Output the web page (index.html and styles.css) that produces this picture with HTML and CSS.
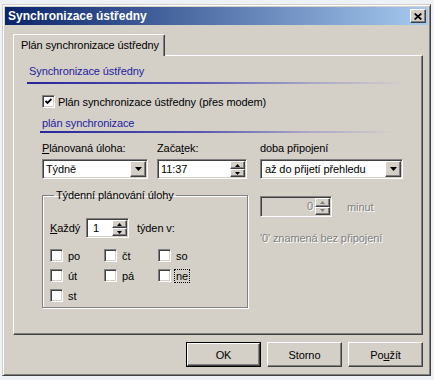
FILE: index.html
```html
<!DOCTYPE html>
<html lang="cs">

<head>
  <meta charset="utf8">
  <meta name="viewport" content="width=device-width, initial-scale=1.0">
  <title>Synchronizace ústředny</title>
  <link rel="stylesheet" href="styles.css">
</head>

<body>
  <div class="window">
    <div class="titlebar">
      <span class="title">Synchronizace ústředny</span>
      <span class="close raised">
        <svg width="8" height="7" viewBox="0 0 8 7">
          <path d="M0.7 0.5 L7.3 6.5 M7.3 0.5 L0.7 6.5" stroke="#000" stroke-width="1.7" fill="none" />
        </svg>
      </span>
    </div>

    <div class="client">
      <div class="tabs">
        <div class="tab">Plán synchronizace ústředny</div>
      </div>

      <div class="panel">
        <div class="section">Synchronizace ústředny</div>

        <div class="check-row">
          <span class="check">
            <svg width="7" height="7" viewBox="0 0 7 7">
              <path d="M0.5 3 L2.5 5 L6.5 1" stroke="#000" stroke-width="1.8" fill="none" />
            </svg>
          </span>
          Plán synchronizace ústředny (přes modem)
        </div>

        <div class="section sub">plán synchronizace</div>

        <div class="schedule">
          <div class="left">
            <div class="fields">
              <div class="field task">
                <div class="label"><u>P</u>lánovaná úloha:</div>
                <div class="combo sunken">
                  <span class="value">Týdně</span>
                  <span class="drop raised">
                    <svg width="7" height="4" viewBox="0 0 7 4"><path d="M0 0h7L3.5 4z" fill="#000" /></svg>
                  </span>
                </div>
              </div>
              <div class="field start">
                <div class="label">Zača<u>t</u>ek:</div>
                <div class="spin sunken">
                  <span class="value">11:37</span>
                  <span class="spin-btns">
                    <span class="spin-btn raised"><svg width="5" height="3" viewBox="0 0 5 3"><path d="M0 3h5L2.5 0z" fill="#000" /></svg></span>
                    <span class="spin-btn raised"><svg width="5" height="3" viewBox="0 0 5 3"><path d="M0 0h5L2.5 3z" fill="#000" /></svg></span>
                  </span>
                </div>
              </div>
            </div>

            <fieldset class="group">
              <legend>Týdenní plánování úlohy</legend>
              <div class="every">
                <span class="every-label"><u>K</u>aždý</span>
                <div class="spin sunken count">
                  <span class="value">1</span>
                  <span class="spin-btns">
                    <span class="spin-btn raised"><svg width="5" height="3" viewBox="0 0 5 3"><path d="M0 3h5L2.5 0z" fill="#000" /></svg></span>
                    <span class="spin-btn raised"><svg width="5" height="3" viewBox="0 0 5 3"><path d="M0 0h5L2.5 3z" fill="#000" /></svg></span>
                  </span>
                </div>
                <span class="week">týden v:</span>
              </div>
              <div class="days">
                <div class="day"><span class="check"></span>po</div>
                <div class="day"><span class="check"></span>čt</div>
                <div class="day"><span class="check"></span>so</div>
                <div class="day"><span class="check"></span>út</div>
                <div class="day"><span class="check"></span>pá</div>
                <div class="day"><span class="check"></span><span class="focus">ne</span></div>
                <div class="day"><span class="check"></span>st</div>
              </div>
            </fieldset>
          </div>

          <div class="right">
            <div class="label">doba připojení</div>
            <div class="combo sunken">
              <span class="value">až do přijetí přehledu</span>
              <span class="drop raised">
                <svg width="7" height="4" viewBox="0 0 7 4"><path d="M0 0h7L3.5 4z" fill="#000" /></svg>
              </span>
            </div>
            <div class="minutes">
              <div class="spin sunken disabled">
                <span class="value">0</span>
                <span class="spin-btns">
                  <span class="spin-btn raised"><svg width="5" height="3" viewBox="0 0 5 3"><path d="M0 3h5L2.5 0z" fill="#808080" /></svg></span>
                  <span class="spin-btn raised"><svg width="5" height="3" viewBox="0 0 5 3"><path d="M0 0h5L2.5 3z" fill="#808080" /></svg></span>
                </span>
              </div>
              <span class="muted">minut</span>
            </div>
            <div class="muted note">'0' znamená bez připojení</div>
          </div>
        </div>
      </div>

      <div class="buttons">
        <div class="button default"><span class="raised">OK</span></div>
        <div class="button"><span class="raised">Storno</span></div>
        <div class="button"><span class="raised">Po<u>u</u>žít</span></div>
      </div>
    </div>
  </div>
</body>

</html>
```

FILE: styles.css
```css
html,
body {
  margin: 0;
}

body {
  padding: 4px 0 0 2px;
  background: #eef2f7;
  font-family: 'Liberation Sans', Arial, sans-serif;
  font-size: 11px;
  letter-spacing: -0.1px;
  color: #000;
}

u {
  text-decoration-thickness: 1px;
  text-underline-offset: 1px;
}

/* 3D borders */
.raised {
  box-sizing: border-box;
  background: #d4d0c8;
  border: 1px solid;
  border-color: #fff #404040 #404040 #fff;
  box-shadow: inset -1px -1px #808080;
}

.sunken {
  box-sizing: border-box;
  background: #fff;
  border: 1px solid;
  border-color: #808080 #fff #fff #808080;
  box-shadow: inset 1px 1px #404040, inset -1px -1px #d4d0c8;
  padding: 1px;
}

.window {
  width: 429px;
  height: 372px;
  box-sizing: border-box;
  background: #d4d0c8;
  border: 1px solid;
  border-color: #d4d0c8 #404040 #404040 #d4d0c8;
  box-shadow: inset 1px 1px #fff, inset -1px -1px #808080;
  padding: 2px;
  display: flex;
  flex-direction: column;
}

.titlebar {
  height: 18px;
  display: flex;
  align-items: center;
  justify-content: space-between;
  padding: 0 2px 0 3px;
  background: linear-gradient(90deg, #0a246a, #a6caf0);
}

.title {
  color: #fff;
  font-weight: bold;
  font-size: 12px;
  letter-spacing: 0;
}

.close {
  width: 16px;
  height: 14px;
  display: flex;
  align-items: center;
  justify-content: center;
}

.client {
  flex: 1;
  padding: 9px 5px 0 8px;
}

.tabs {
  display: flex;
  position: relative;
  z-index: 1;
}

.tab {
  width: 152px;
  height: 22px;
  box-sizing: border-box;
  margin-bottom: -1px;
  padding: 4px 0 0 7px;
  background: #d4d0c8;
  border: 1px solid;
  border-bottom: 0;
  border-color: #fff #404040 #fff #fff;
  border-radius: 2px 2px 0 0;
  box-shadow: inset -1px 0 #808080;
}

.panel {
  height: 280px;
  box-sizing: border-box;
  border: 1px solid;
  border-color: #fff #404040 #404040 #fff;
  box-shadow: inset -1px -1px #808080;
  padding-top: 9px;
}

.section {
  margin-left: 13px;
  width: 378px;
  padding-left: 2px;
  line-height: 13px;
  color: #1c1ca0;
}

.section::after {
  content: "";
  display: block;
  height: 2px;
  margin: 4px 0 0 -2px;
  background: linear-gradient(90deg, #26269a, #5858b0 45%, #a9a8c8 75%, #d4d0c8);
}

.section.sub {
  margin: 9px 0 0 26px;
  width: 355px;
}

.section.sub::after {
  margin-top: 1px;
}

.check-row {
  display: flex;
  align-items: center;
  gap: 3px;
  height: 13px;
  margin: 11px 0 0 28px;
}

.check {
  width: 13px;
  height: 13px;
  flex: none;
  box-sizing: border-box;
  background: #fff;
  border: 1px solid;
  border-color: #808080 #fff #fff #808080;
  box-shadow: inset 1px 1px #404040, inset -1px -1px #d4d0c8;
  display: flex;
  align-items: center;
  justify-content: center;
}

.schedule {
  display: flex;
  margin: 9px 0 0 28px;
}

.left {
  width: 206px;
}

.right {
  width: 143px;
  margin-left: 12px;
}

.fields {
  display: flex;
  gap: 9px;
}

.task {
  width: 106px;
}

.start {
  width: 90px;
}

.label {
  line-height: 13px;
  margin-bottom: 4px;
}

.combo,
.spin {
  height: 20px;
  display: flex;
  align-items: stretch;
}

.value {
  flex: 1;
  line-height: 16px;
  padding-left: 2px;
}

.drop {
  width: 16px;
  display: flex;
  align-items: center;
  justify-content: center;
}

.spin-btns {
  width: 15px;
  display: flex;
  flex-direction: column;
}

.spin-btn {
  flex: 1;
  display: flex;
  align-items: center;
  justify-content: center;
}

.group {
  margin: 10px 0 0;
  padding: 16px 0 0 7px;
  height: 119px;
  box-sizing: border-box;
  border: 1px solid #808080;
  box-shadow: inset 1px 1px #fff, 1px 1px #fff;
}

.group legend {
  padding: 0 2px;
  margin-left: 4px;
  line-height: 13px;
}

.every {
  display: flex;
  align-items: center;
}

.every-label {
  width: 36px;
}

.count {
  width: 43px;
}

.count .value {
  padding-left: 5px;
}

.week {
  margin-left: 8px;
}

.days {
  display: grid;
  grid-template-columns: repeat(3, 54px);
  row-gap: 7px;
  margin-top: 11px;
}

.day {
  display: flex;
  align-items: center;
  gap: 5px;
  height: 13px;
}

.focus {
  outline: 1px dotted #000;
  outline-offset: 0;
  padding: 0 1px;
  margin-left: -1px;
}

.right .combo .value {
  padding-left: 3px;
}

.minutes {
  display: flex;
  align-items: center;
  margin-top: 17px;
}

.disabled {
  width: 72px;
  height: 21px;
  background: #d4d0c8;
}

.disabled .value {
  text-align: right;
  padding-right: 2px;
  color: #808080;
  text-shadow: 1px 1px #fff;
}

.muted {
  color: #808080;
  text-shadow: 1px 1px #fff;
}

.minutes .muted {
  margin-left: 15px;
}

.note {
  margin-top: 15px;
  line-height: 13px;
}

.buttons {
  display: flex;
  justify-content: flex-end;
  gap: 6px;
  margin-top: 7px;
}

.button {
  width: 75px;
  height: 25px;
  display: flex;
}

.button .raised {
  flex: 1;
  display: flex;
  align-items: center;
  justify-content: center;
  box-shadow: inset -1px -1px #808080;
}

.button.default {
  box-sizing: border-box;
  border: 1px solid #000;
}
```
